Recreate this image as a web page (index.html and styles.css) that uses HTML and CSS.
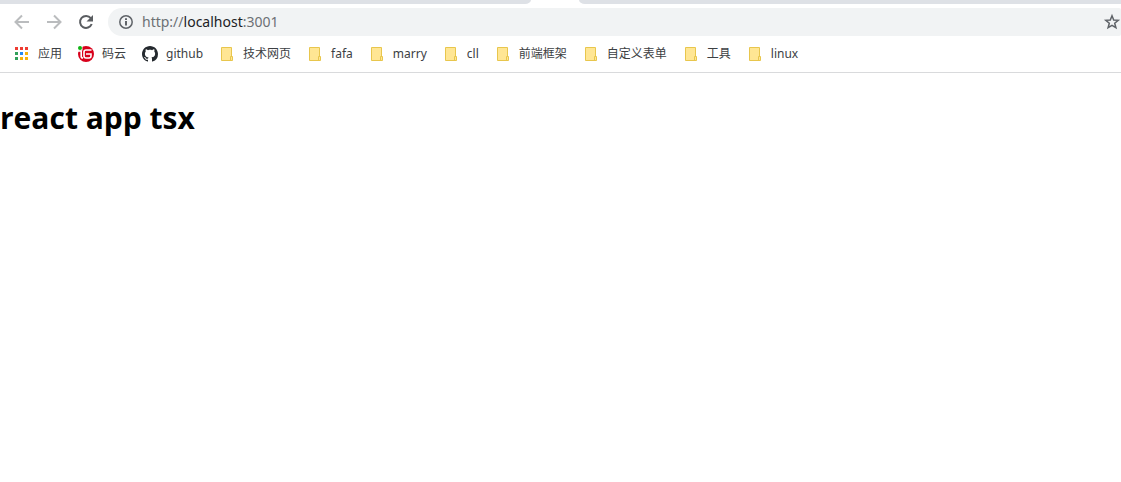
FILE: index.html
```html
<!DOCTYPE html>
<html lang="zh-CN">
<head>
<meta charset="utf-8">
<title>react app tsx</title>
<link rel="stylesheet" href="styles.css">
</head>
<body>
<svg class="defs" width="0" height="0" aria-hidden="true">
  <symbol id="folder" viewBox="0 0 16 16">
    <path d="M2.500 1.500h10v9h1v4h-11z" fill="#ffe694"/>
    <path d="M12.500 10.500v-9h-10v13h11v-4h-2v4" fill="none" stroke="#e8c64d"/>
  </symbol>
</svg>
<header class="browser">
  <div class="tabs"><span class="tabs-left"></span><span class="tabs-right"></span></div>
  <div class="toolbar">
    <button class="nav" type="button" aria-label="Back" disabled>
      <svg width="16" height="16" viewBox="0 0 16 16" fill="none" stroke="#babcbe" stroke-width="2"><path d="M15 8H2.500M8 1.500L1.500 8L8 14.500"/></svg>
    </button>
    <button class="nav" type="button" aria-label="Forward" disabled>
      <svg width="16" height="16" viewBox="0 0 16 16" fill="none" stroke="#babcbe" stroke-width="2"><path d="M1 8h12.500M8 1.500L14.500 8L8 14.500"/></svg>
    </button>
    <button class="nav" type="button" aria-label="Reload">
      <svg width="16" height="16" viewBox="0 0 16 16"><path d="M12.800 4.200A6 6 0 1 0 13.700 10" fill="none" stroke="#5a5d61" stroke-width="2"/><path d="M15 1v6.500H8.500z" fill="#5a5d61"/></svg>
    </button>
    <div class="address">
      <button class="info" type="button" aria-label="Site information">
        <svg width="16" height="16" viewBox="0 0 16 16"><circle cx="8" cy="8" r="6.200" fill="none" stroke="#5f6368" stroke-width="1.500"/><path d="M7 7h2v4.500H7zM7 4.300h2v1.700H7z" fill="#5f6368"/></svg>
      </button>
      <div class="url" role="textbox" aria-label="Address" contenteditable="true" spellcheck="false">http://<span class="host">localhost</span>:3001</div>
      <button class="star" type="button" aria-label="Bookmark">
        <svg width="18" height="18" viewBox="0 0 18 18"><path d="M9 2.800l1.700 4.200 4.500.3-3.500 2.900 1.200 4.500L9 12.300l-3.900 2.400 1.200-4.500-3.500-2.900 4.500-.3z" fill="none" stroke="#5f6368" stroke-width="1.500"/></svg>
      </button>
    </div>
  </div>
  <nav class="bookmarks" aria-label="Bookmarks">
    <a href="#"><svg class="icon" viewBox="0 0 16 16"><path d="M1 1h3v3H1zM6 1h3v3H6zM11 1h3v3h-3z" fill="#ee3c32"/><path d="M1 6h3v3H1zM1 11h3v3H1z" fill="#31a05a"/><path d="M6 6h3v3H6z" fill="#2489f5"/><path d="M11 6h3v3h-3zM6 11h3v3H6zM11 11h3v3h-3z" fill="#f8b20a"/></svg>应用</a>
    <a href="#"><svg class="icon" viewBox="0 0 16 16"><circle cx="8" cy="8" r="8" fill="#d8001b"/><path d="M0 0h4.500v4.500H0z" fill="#fff"/><circle cx="2" cy="2" r="2" fill="#0fb414"/><path d="M0 5h4M3.200 5v5.500q0 1.500 1.800 1.500M13.500 4H8Q6 4 6 6v4q0 2 2 2h3q2 0 2-2V8H8" fill="none" stroke="#fff" stroke-width="1.600"/></svg>码云</a>
    <a href="#"><svg class="icon" viewBox="0 0 16 16"><path fill="#24292e" d="M8 0C3.580 0 0 3.580 0 8c0 3.540 2.290 6.530 5.470 7.590.4.070.55-.17.55-.38 0-.19-.01-.82-.01-1.490-2.010.37-2.530-.49-2.690-.94-.09-.23-.48-.94-.82-1.130-.28-.15-.68-.52-.01-.53.63-.01 1.080.58 1.230.82.72 1.210 1.870.87 2.330.66.07-.52.28-.87.510-1.070-1.780-.2-3.640-.89-3.640-3.950 0-.87.310-1.590.82-2.150-.08-.2-.36-1.020.08-2.120 0 0 .67-.21 2.200.82.64-.18 1.320-.27 2-.27s1.360.09 2 .27c1.530-1.040 2.200-.82 2.200-.82.44 1.100.16 1.920.08 2.120.51.56.82 1.270.82 2.150 0 3.070-1.870 3.750-3.650 3.950.29.25.54.73.54 1.480 0 1.070-.01 1.930-.01 2.200 0 .21.15.46.55.38A8.010 8.010 0 0 0 16 8c0-4.420-3.580-8-8-8z"/></svg>github</a>
    <a href="#"><svg class="icon"><use href="#folder"/></svg>技术网页</a>
    <a href="#"><svg class="icon"><use href="#folder"/></svg>fafa</a>
    <a href="#"><svg class="icon"><use href="#folder"/></svg>marry</a>
    <a href="#"><svg class="icon"><use href="#folder"/></svg>cll</a>
    <a href="#"><svg class="icon"><use href="#folder"/></svg>前端框架</a>
    <a href="#"><svg class="icon"><use href="#folder"/></svg>自定义表单</a>
    <a href="#"><svg class="icon"><use href="#folder"/></svg>工具</a>
    <a href="#"><svg class="icon"><use href="#folder"/></svg>linux</a>
  </nav>
</header>
<main><h1>react app tsx</h1></main>
</body>
</html>
```
FILE: styles.css
```css
* { box-sizing: border-box; }
body {
  margin: 0;
  background: #fff;
  color: #000;
  font-family: "Noto Sans", "Noto Sans CJK SC", sans-serif;
}
.defs { display: none; }
.browser { border-bottom: 1px solid #d9dadc; }
.tabs { display: flex; gap: 48px; height: 4px; }
.tabs span { background: #dee1e6; }
.tabs-left { flex: 531 0 0; border-bottom-right-radius: 6px 4px; }
.tabs-right { flex: 542 0 0; border-bottom-left-radius: 6px 4px; }
.toolbar {
  display: flex;
  align-items: center;
  gap: 16px;
  padding: 4px 0 2px 14px;
}
button {
  display: flex;
  padding: 0;
  border: 0;
  background: none;
}
.address {
  flex: 1;
  display: flex;
  align-items: center;
  height: 28px;
  margin-left: -2px;
  padding-left: 10px;
  background: #f1f3f4;
  border-radius: 14px 2px 2px 14px;
}
.url {
  flex: 1;
  margin-left: 8px;
  outline: 0;
  color: #6c7074;
  font-size: 14px;
  line-height: 20px;
  white-space: nowrap;
}
.host { color: #202124; }
.bookmarks {
  display: flex;
  align-items: center;
  gap: 16px;
  height: 34px;
  padding: 0 0 2px 14px;
  overflow: hidden;
}
.bookmarks a {
  display: flex;
  align-items: center;
  gap: 8px;
  flex: none;
  color: #3c4043;
  font-size: 12px;
  line-height: 16px;
  text-decoration: none;
}
.icon { width: 16px; height: 16px; }
h1 {
  margin: 24px 0;
  font-family: "Open Sans", "Noto Sans", sans-serif;
  font-size: 30px;
  line-height: 42px;
  font-weight: 700;
}
```
